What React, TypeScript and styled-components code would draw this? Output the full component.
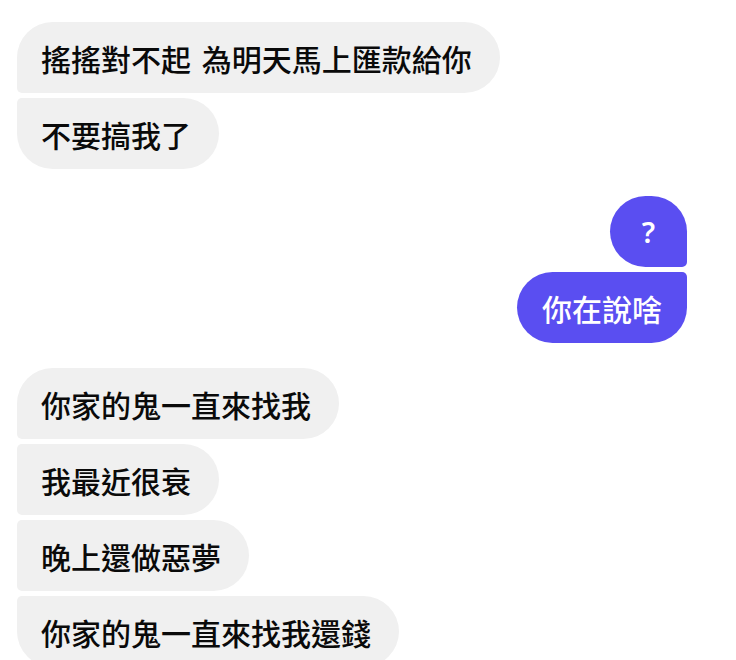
import React from 'react'
import styled, { createGlobalStyle } from 'styled-components'

const GlobalStyle = createGlobalStyle`
  html, body {
    margin: 0;
    padding: 0;
    background: #ffffff;
  }
  body {
    font-family: "Noto Sans CJK TC", "Noto Sans", sans-serif;
    overflow: hidden;
  }
`

type Side = 'in' | 'out'

const incoming: string[][] = [
  ['搖搖對不起 為明天馬上匯款給你', '不要搞我了'],
  ['你家的鬼一直來找我', '我最近很衰', '晚上還做惡夢', '你家的鬼一直來找我還錢'],
]

const Thread = styled.div`
  width: 736px;
  height: 660px;
  padding-top: 22px;
  box-sizing: border-box;
  display: flex;
  flex-direction: column;
`

const Group = styled.div<{ $side: Side; $top?: number }>`
  display: flex;
  flex-direction: column;
  gap: 5px;
  margin-top: ${p => p.$top ?? 0}px;
  align-items: ${p => (p.$side === 'out' ? 'flex-end' : 'flex-start')};
  padding: ${p => (p.$side === 'out' ? '0 49px 0 0' : '0 0 0 17px')};
`

const Bubble = styled.div<{ $side: Side; $radius: string }>`
  box-sizing: border-box;
  height: 71px;
  min-width: 77px;
  display: flex;
  align-items: center;
  justify-content: center;
  padding: 0 28px 0 24px;
  font-size: 30px;
  font-weight: 500;
  line-height: 1;
  word-spacing: 4px;
  white-space: nowrap;
  border-radius: ${p => p.$radius};
  background: ${p => (p.$side === 'out' ? '#5a4ef1' : '#f0f0f0')};
  color: ${p => (p.$side === 'out' ? '#ffffff' : '#0a0a0a')};
`

const OutBubble = styled(Bubble)`
  padding: 0 25px;
`

const QuestionMark = styled.span`
  font-family: "Noto Sans", sans-serif;
  font-size: 29px;
  font-weight: 600;
`

function radiusFor(side: Side, idx: number, count: number) {
  const big = '36px'
  const small = '5px'
  const first = idx === 0
  const last = idx === count - 1
  if (side === 'in') {
    return `${first ? big : small} ${big} ${big} ${last ? big : small}`
  }
  return `${big} ${first ? big : small} ${last ? big : small} ${big}`
}

function InGroup({ lines, top }: { lines: string[]; top?: number }) {
  return (
    <Group $side="in" $top={top}>
      {lines.map((line, idx) => (
        <Bubble key={idx} $side="in" $radius={radiusFor('in', idx, lines.length)}>
          {line}
        </Bubble>
      ))}
    </Group>
  )
}

export default function App() {
  return (
    <>
      <GlobalStyle />
      <Thread>
        <InGroup lines={incoming[0]} />
        <Group $side="out" $top={27}>
          <OutBubble $side="out" $radius={radiusFor('out', 0, 2)}>
            <QuestionMark>?</QuestionMark>
          </OutBubble>
          <OutBubble $side="out" $radius={radiusFor('out', 1, 2)}>
            你在說啥
          </OutBubble>
        </Group>
        <InGroup lines={incoming[1]} top={25} />
      </Thread>
    </>
  )
}
